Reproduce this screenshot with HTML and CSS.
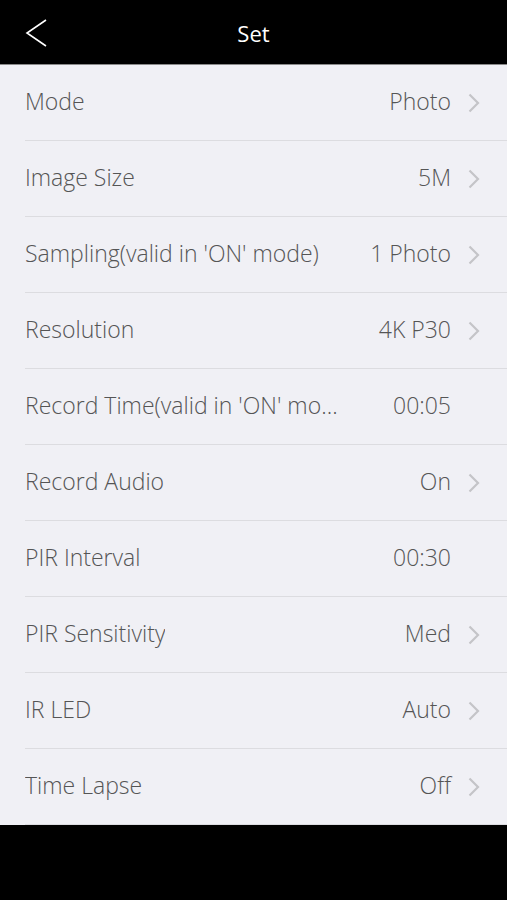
FILE: index.html
```html
<!DOCTYPE html>
<html lang="en">
<head>
    <meta charset="UTF-8">
    <meta name="viewport" content="width=device-width, initial-scale=1.0">
    <title>Set</title>
    <link rel="stylesheet" href="styles.css">
</head>
<body>
    <div class="header">
        <svg class="back" width="24" height="30" viewBox="0 0 24 30">
            <polyline points="20,4 1,17 20,30" fill="none" stroke="#fff" stroke-width="1.6"/>
        </svg>
        <h1>Set</h1>
    </div>
    <div class="list">
        <div class="row"><span class="label">Mode</span><span class="value">Photo</span><span class="arrow"></span></div>
        <div class="row"><span class="label">Image Size</span><span class="value">5M</span><span class="arrow"></span></div>
        <div class="row"><span class="label">Sampling(valid in 'ON' mode)</span><span class="value">1 Photo</span><span class="arrow"></span></div>
        <div class="row"><span class="label">Resolution</span><span class="value">4K P30</span><span class="arrow"></span></div>
        <div class="row"><span class="label">Record Time(valid in 'ON' mode)</span><span class="value">00:05</span><span class="arrow none"></span></div>
        <div class="row"><span class="label">Record Audio</span><span class="value">On</span><span class="arrow"></span></div>
        <div class="row"><span class="label">PIR Interval</span><span class="value">00:30</span><span class="arrow none"></span></div>
        <div class="row"><span class="label">PIR Sensitivity</span><span class="value">Med</span><span class="arrow"></span></div>
        <div class="row"><span class="label">IR LED</span><span class="value">Auto</span><span class="arrow"></span></div>
        <div class="row"><span class="label">Time Lapse</span><span class="value">Off</span><span class="arrow"></span></div>
    </div>
</body>
</html>
```

FILE: styles.css
```css
body {
    margin: 0;
    padding: 0;
    background: #000;
    font-family: "Open Sans", "Liberation Sans", Arial, sans-serif;
    overflow: hidden;
}
.header {
    height: 60px;
    padding-top: 4px;
    background: #000;
    border-bottom: 1px solid #8a8a8a;
    display: flex;
    align-items: center;
    justify-content: center;
    position: relative;
}
.header h1 {
    margin: 0 0 2px;
    color: #fff;
    font-size: 22px;
    font-weight: normal;
}
.back {
    position: absolute;
    left: 26px;
    top: 16px;
    overflow: visible;
}
.list {
    background: #f0f0f5;
    padding-left: 25px;
}
.row {
    height: 72px;
    padding-bottom: 3px;
    border-bottom: 1px solid #dcdce0;
    display: flex;
    align-items: center;
    color: #555;
    font-size: 23px;
    font-weight: 300;
}
.label {
    max-width: 316px;
    white-space: nowrap;
    overflow: hidden;
    text-overflow: ellipsis;
}
.value {
    margin-left: auto;
    white-space: nowrap;
}
.arrow {
    width: 12px;
    height: 20px;
    margin-top: 3px;
    margin-left: 17px;
    margin-right: 27px;
    background: url("data:image/svg+xml,%3Csvg xmlns='http://www.w3.org/2000/svg' width='12' height='20'%3E%3Cpolyline points='1.5,1.5 10,10 1.5,18.5' fill='none' stroke='%23c4c4c8' stroke-width='2.2'/%3E%3C/svg%3E") no-repeat;
}
.arrow.none {
    background: none;
}
```
